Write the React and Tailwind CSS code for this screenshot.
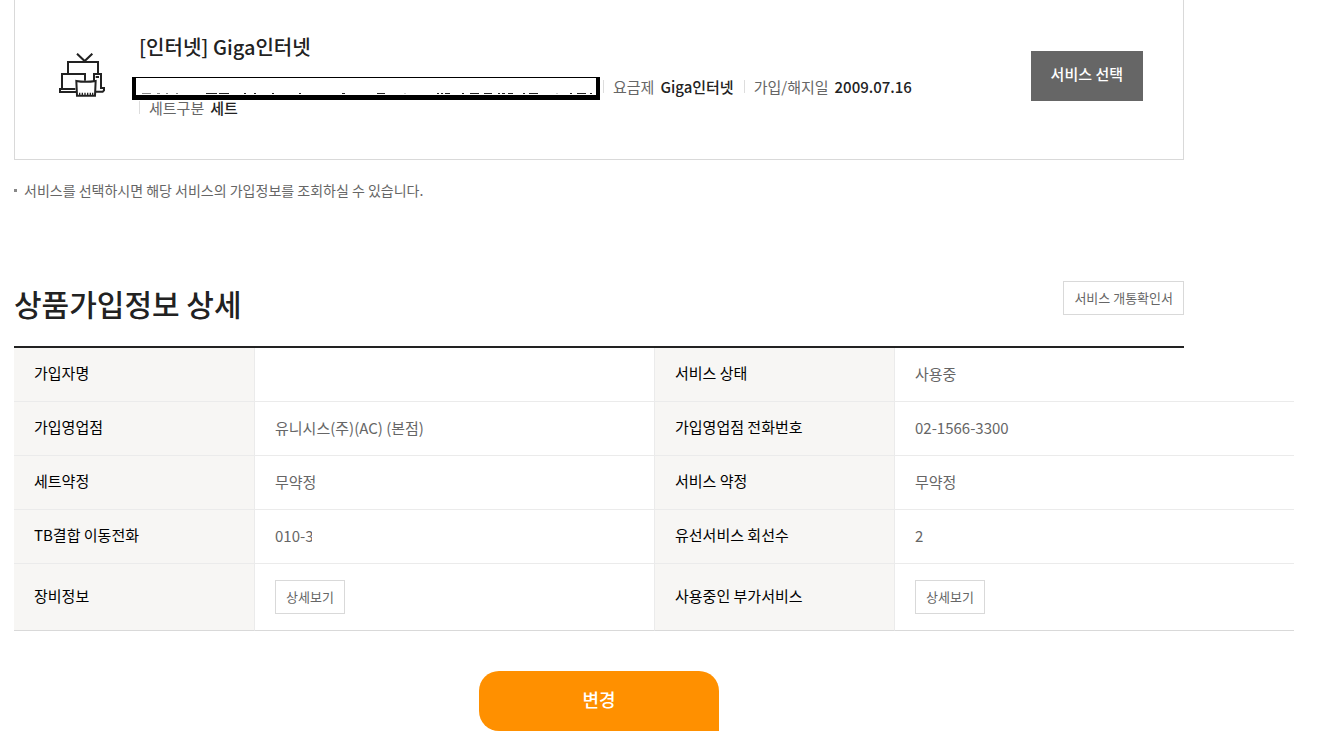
import React from "react";

const INFO_ROWS = [
  [
    { label: "가입자명", value: "" },
    { label: "서비스 상태", value: "사용중" },
  ],
  [
    { label: "가입영업점", value: "유니시스(주)(AC) (본점)" },
    { label: "가입영업점 전화번호", value: "02-1566-3300" },
  ],
  [
    { label: "세트약정", value: "무약정" },
    { label: "서비스 약정", value: "무약정" },
  ],
  [
    { label: "TB결합 이동전화", value: "010-3", masked: true },
    { label: "유선서비스 회선수", value: "2" },
  ],
  [
    { label: "장비정보", detail: true },
    { label: "사용중인 부가서비스", detail: true },
  ],
];

// [x, width, color] of the marks left visible above the mask's lower edge
const MASK_MARKS = [
  [10, 9, "#888"], [25, 3, "#888"], [34, 2, "#888"], [44, 2, "#888"],
  [74, 11, "#222"], [87, 10, "#222"], [112, 2, "#222"], [122, 2, "#222"],
  [140, 2, "#222"], [167, 2, "#222"], [210, 3, "#222"],
  [245, 8, "#222"], [272, 2, "#ccc"], [305, 2, "#222"], [309, 2, "#222"], [313, 5, "#222"],
  [330, 2, "#222"], [338, 9, "#222"], [352, 8, "#222"], [366, 2, "#222"], [370, 3, "#222"],
  [376, 5, "#222"], [391, 2, "#222"], [397, 9, "#222"], [424, 2, "#ccc"],
  [438, 2, "#222"], [445, 9, "#222"], [458, 2, "#222"],
];

function DeviceIcon() {
  return (
    <svg
      width="46"
      height="44"
      viewBox="57 39 138 132"
      fill="none"
      stroke="#222"
      strokeWidth="6"
      className="shrink-0"
      aria-hidden="true"
    >
      <path d="M111 41 134 63 157 41" />
      <path d="M84 102V66H174V102" />
      <path d="M66 146V102H135V122" />
      <path d="M106 147H60V156H110" />
      <path d="M162 124V102H183V144H192V151L188 155H164" />
      <path d="M167 111H177" />
      <path d="M109 123Q136 128 167 123L165 167H111Z" fill="#fff" />
      <path d="M119 158V166M127 158V166M135 158V166M143 158V166M151 158V166M158 158V166" strokeWidth="4" />
    </svg>
  );
}

function SpecItem({ label, value }) {
  return (
    <li className="mr-[10px] flex gap-[6px] text-[15px] leading-[21px] whitespace-nowrap">
      <span className="my-[4px] mr-[3px] w-px bg-[#ddd]" />
      <span className="text-[#666]">{label}</span>
      <span className="font-medium text-[#222]">{value}</span>
    </li>
  );
}

function SmallButton({ children }) {
  return (
    <button
      type="button"
      className="h-[34px] border border-[#d9d9d9] bg-white px-[10px] text-[13px] whitespace-nowrap text-[#666]"
    >
      {children}
    </button>
  );
}

export default function App() {
  return (
    <div className="overflow-x-hidden bg-white pb-[14px] pr-[145px] pl-[14px] font-['Noto_Sans_CJK_KR','Noto_Sans',sans-serif] text-[#222]">
      {/* Selected service */}
      <section className="flex items-start border border-t-0 border-[#d9d9d9] pt-[32px] pr-[40px] pb-[41px] pl-[44px]">
        <div className="pt-[21px]">
          <DeviceIcon />
        </div>
        <div className="mr-[60px] ml-[34px] flex-1">
          <h3 className="text-[20px] leading-[30px] font-medium">[인터넷] Giga인터넷</h3>
          <ul className="mt-[14px] flex flex-wrap">
            <li className="mr-[3px] -ml-[7px] h-[21px] pt-px">
              <div className="h-[23px] w-[468px] border-x-4 border-t border-b-[5px] border-black bg-white">
                <svg width="460" height="17" viewBox="4 0 460 17" aria-hidden="true">
                  {MASK_MARKS.map(([x, w, color]) => (
                    <rect key={x} x={x} y="15" width={w} height="1" fill={color} />
                  ))}
                </svg>
              </div>
            </li>
            <SpecItem label="요금제" value="Giga인터넷" />
            <SpecItem label="가입/해지일" value="2009.07.16" />
            <SpecItem label="세트구분" value="세트" />
          </ul>
        </div>
        <button
          type="button"
          className="mt-[19px] h-[50px] bg-[#666] px-[20px] pb-[4px] text-[15px] font-medium whitespace-nowrap text-white"
        >
          서비스 선택
        </button>
      </section>

      <p className="mt-[20px] flex items-center gap-[7px] text-[14px] leading-[20px] text-[#666]">
        <span className="size-[3px] bg-[#888]" />
        서비스를 선택하시면 해당 서비스의 가입정보를 조회하실 수 있습니다.
      </p>

      {/* Subscription detail */}
      <div className="mt-[81px] flex items-start justify-between border-b-2 border-[#222] pb-[21px]">
        <h2 className="text-[30px] leading-[44px] font-medium">상품가입정보 상세</h2>
        <SmallButton>서비스 개통확인서</SmallButton>
      </div>
      <div className="-mr-[110px]">
        <table className="w-full table-fixed border-separate border-spacing-0 text-left text-[15px] leading-[22px]">
          <colgroup>
            <col className="w-[240px]" />
            <col />
            <col className="w-[240px]" />
            <col />
          </colgroup>
          <tbody>
            {INFO_ROWS.map((row, i) => (
              <tr key={i} className="h-[54px] *:border-b *:border-[#ebebeb] last:h-[67px] last:*:border-b-[#d9d9d9]">
                {row.map((cell) => (
                  <React.Fragment key={cell.label}>
                    <th
                      scope="row"
                      className="border-l bg-[#f7f6f4] px-[20px] pb-[3px] font-normal text-black first:border-l-0"
                    >
                      {cell.label}
                    </th>
                    <td className="border-l px-[20px] text-[#666]">
                      {cell.detail ? (
                        <SmallButton>상세보기</SmallButton>
                      ) : (
                        <span
                          className={
                            cell.masked
                              ? "block w-[37px] overflow-hidden pb-[2px] whitespace-nowrap"
                              : "block pb-[2px]"
                          }
                        >
                          {cell.value}
                        </span>
                      )}
                    </td>
                  </React.Fragment>
                ))}
              </tr>
            ))}
          </tbody>
        </table>
      </div>

      <div className="mt-[40px] flex justify-center">
        <button
          type="button"
          className="h-[60px] w-[240px] rounded-[20px] rounded-br-none bg-[#ff9000] pb-[4px] text-[18px] font-medium text-white"
        >
          변경
        </button>
      </div>
    </div>
  );
}
